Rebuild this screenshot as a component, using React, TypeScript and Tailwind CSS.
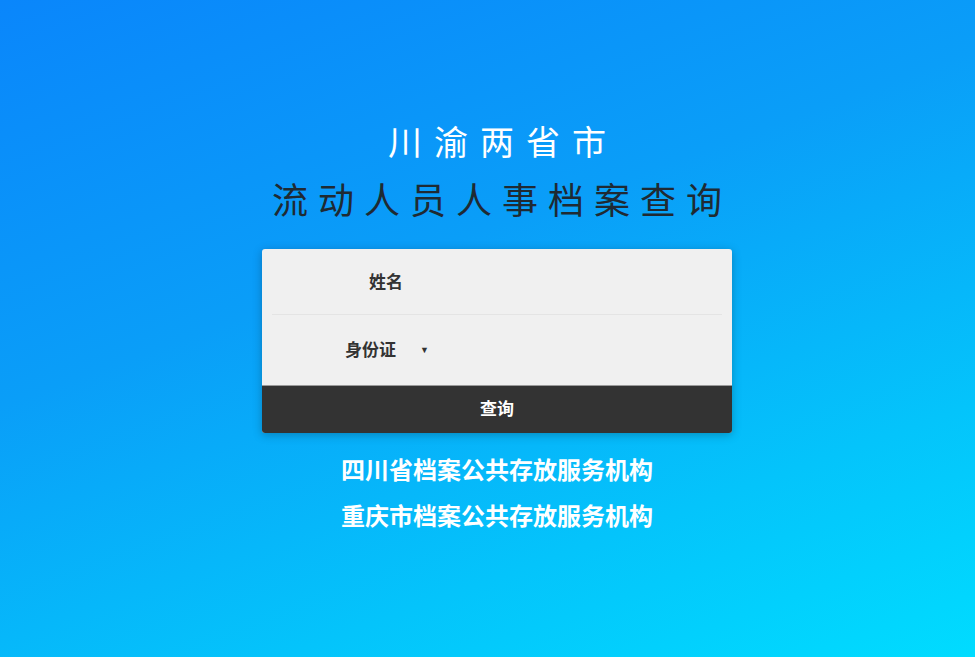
const App = () => {
  return (
    <div className="min-h-[657px] w-full bg-[linear-gradient(160deg,#0a86fb_0%,#0a9ef8_40%,#04c4fb_75%,#00dcff_100%)] font-['Liberation_Sans','Noto_Sans_CJK_SC',sans-serif]">
      <div className="flex flex-col items-center pt-[120px] pl-[19px]">
        {/* Title */}
        <h1 className="text-[34px] leading-[46px] font-normal tracking-[12px] pl-[12px] text-white">川渝两省市</h1>
        <h2 className="mt-[13px] text-[36px] leading-[46px] font-normal tracking-[10px] pl-[10px] text-[#1f2a33]">流动人员人事档案查询</h2>

        {/* Form card */}
        <div className="mt-[24px] w-[470px] rounded-[3px] bg-[#f0f0f0] shadow-[0_2px_10px_rgba(0,0,0,0.25)] overflow-hidden">
          <div className="px-[10px]">
            <div className="flex items-center h-[66px] pt-[2px] border-b border-[#e4e4e4]">
              <label className="w-[131px] text-right text-[17px] font-bold text-[#333]">姓名</label>
              <input className="flex-1 ml-4 bg-transparent outline-none text-[16px]" />
            </div>
            <div className="flex items-center h-[70px] pt-[2px]">
              <label className="w-[124px] text-right text-[17px] font-bold text-[#333]">身份证</label>
              <span className="ml-[24px] text-[9px] text-[#333]">▼</span>
              <input className="flex-1 ml-4 bg-transparent outline-none text-[16px]" />
            </div>
          </div>
          <button className="block w-full h-[48px] bg-[#333] border-t border-[#9a9a9a] text-white text-[17px] font-bold">查询</button>
        </div>

        {/* Links */}
        <div className="mt-[25px] flex flex-col items-center gap-[20px] text-white text-[24px] leading-[26px] font-bold">
          <a href="#">四川省档案公共存放服务机构</a>
          <a href="#">重庆市档案公共存放服务机构</a>
        </div>
      </div>
    </div>
  );
};

export default App;
